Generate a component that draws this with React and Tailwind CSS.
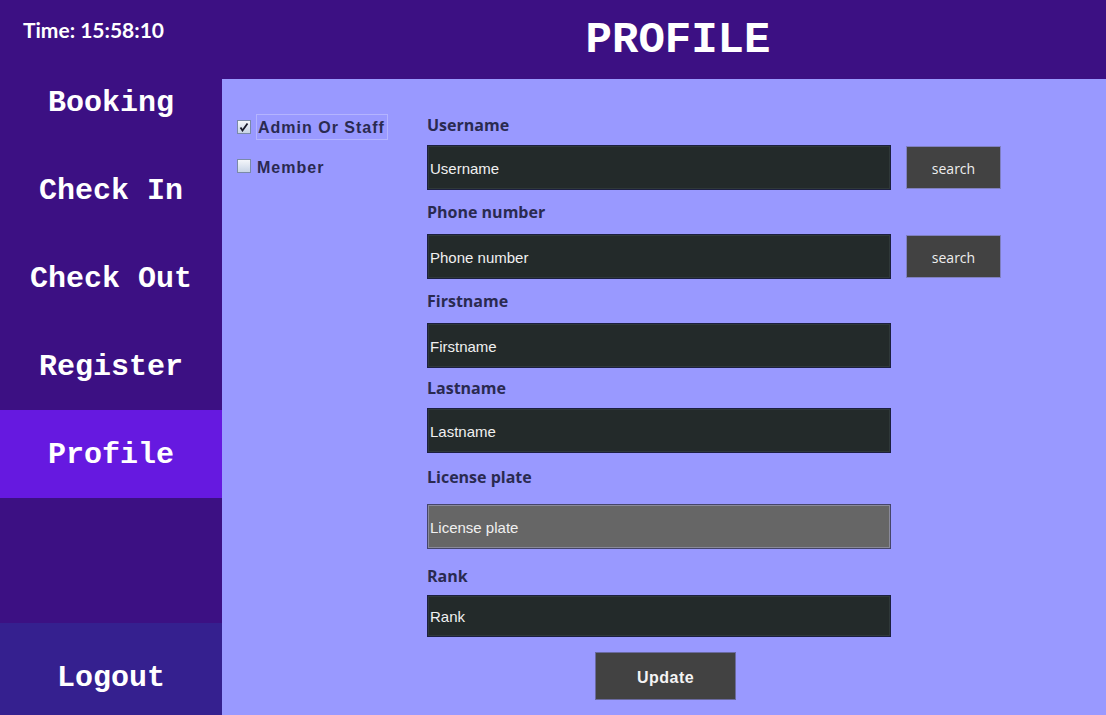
import React from 'react';

const mono = { fontFamily: '"Liberation Mono", "Courier New", monospace' };

function NavItem({ label, active }) {
  return (
    <div
      className={`flex h-[88px] items-center justify-center pt-[3px] text-[30px] font-bold text-white ${
        active ? 'bg-[#6619e0]' : ''
      }`}
      style={mono}
    >
      {label}
    </div>
  );
}

function Field({ value, dim, tall = true }) {
  return (
    <div
      className={`flex w-[464px] items-center border px-[2px] pt-[3px] font-['Liberation_Sans',Arial,sans-serif] text-[15px] ${
        tall ? 'h-[45px]' : 'h-[42px]'
      } ${
        dim
          ? 'border-[#45456a] bg-[#666666] text-[#f0f0f0] shadow-[inset_0_0_0_1px_#8a8a9a]'
          : 'border-[#1c1f40] bg-[#232a2a] text-[#f0f0f0] shadow-[inset_0_0_0_1px_#2f3838]'
      }`}
    >
      {value}
    </div>
  );
}

function Label({ text, className }) {
  return (
    <div
      className={`flex items-center font-['Open_Sans',sans-serif] text-[16px] font-bold text-[#2a2a50] ${className}`}
    >
      {text}
    </div>
  );
}

function SearchButton() {
  return (
    <div className="ml-[15px] flex h-[43px] w-[95px] items-center justify-center border border-[#8080c0] bg-[#424242] pt-[1px] font-['Open_Sans',sans-serif] text-[14px] text-[#eeeeee]">
      search
    </div>
  );
}

function CheckBox({ checked }) {
  return (
    <div className="flex h-[14px] w-[14px] items-center justify-center border border-[#7a8aa8] bg-gradient-to-b from-[#f4f6fa] to-[#c8d4e6]">
      {checked ? (
        <svg width="10" height="10" viewBox="0 0 10 10">
          <path d="M1.5 5.5 L3.5 8.5 L8.5 1.5" fill="none" stroke="#1a1a2a" strokeWidth="1.8" />
        </svg>
      ) : null}
    </div>
  );
}

export default function App() {
  return (
    <div className="flex h-[715px] w-[1106px] overflow-hidden bg-[#3c1083]">
      <aside className="flex w-[222px] flex-col bg-[#3c1083]">
        <div className="flex h-[58px] items-start pl-[23px] pt-[14px] font-['Lato',sans-serif] text-[21px] font-bold text-white">
          Time: 15:58:10
        </div>
        <NavItem label="Booking" />
        <NavItem label="Check In" />
        <NavItem label="Check Out" />
        <NavItem label="Register" />
        <NavItem label="Profile" active />
        <div className="flex-1" />
        <div
          className="flex h-[92px] items-center justify-center bg-[#35208f] pt-[18px] text-[30px] font-bold text-white"
          style={mono}
        >
          Logout
        </div>
      </aside>

      <div className="flex flex-1 flex-col">
        <header
          className="flex h-[79px] items-center justify-center pl-[28px] text-[44px] font-bold text-white"
          style={mono}
        >
          PROFILE
        </header>

        <main className="flex flex-1 bg-[#9999ff]">
          <div className="w-[205px] pl-[15px] pt-[35px] font-['Liberation_Sans',Arial,sans-serif] text-[16px] font-bold tracking-[1px] text-[#2a2a50]">
            <div className="flex h-[26px] items-center gap-[5px]">
              <CheckBox checked />
              <span className="flex h-[26px] items-center border border-[#b4b4ff] pl-[1px] pr-[2px] pt-[2px]">
                Admin Or Staff
              </span>
            </div>
            <div className="mt-[13px] flex h-[26px] items-center gap-[6px]">
              <CheckBox />
              <span className="pt-[3px]">Member</span>
            </div>
          </div>

          <div className="flex flex-col">
            <Label text="Username" className="mt-[26px] h-[40px]" />
            <div className="flex items-center">
              <Field value="Username" />
              <SearchButton />
            </div>
            <Label text="Phone number" className="h-[44px]" />
            <div className="flex items-center">
              <Field value="Phone number" />
              <SearchButton />
            </div>
            <Label text="Firstname" className="h-[44px]" />
            <Field value="Firstname" />
            <Label text="Lastname" className="h-[40px]" />
            <Field value="Lastname" />
            <Label text="License plate" className="h-[51px] pb-[4px]" />
            <Field value="License plate" dim />
            <Label text="Rank" className="h-[46px] pt-[8px]" />
            <Field value="Rank" tall={false} />
            <div className="ml-[168px] mt-[15px] flex h-[48px] w-[141px] items-center justify-center border border-[#6a6aa0] bg-[#424242] pt-[3px] font-['Liberation_Sans',Arial,sans-serif] text-[16px] font-bold tracking-[0.5px] text-[#f4f4f4]">
              Update
            </div>
          </div>
        </main>
      </div>
    </div>
  );
}
